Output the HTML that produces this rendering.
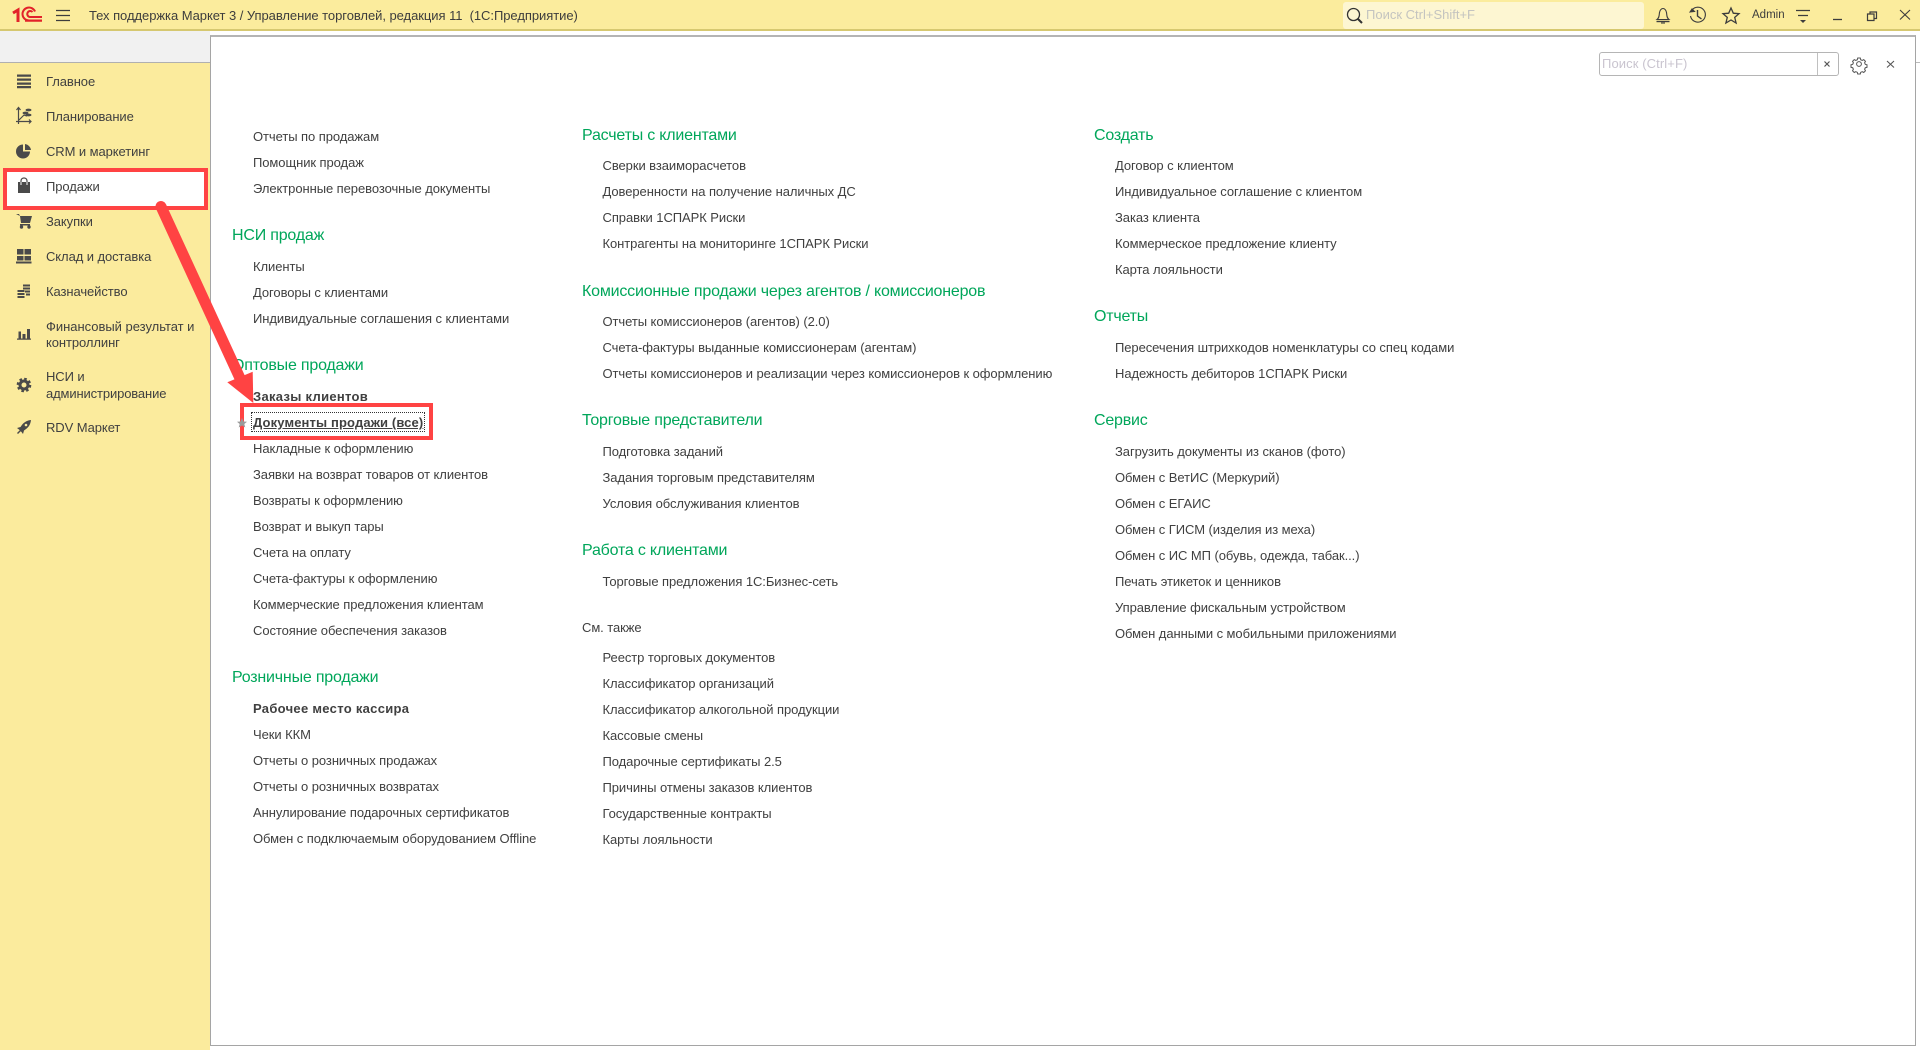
<!DOCTYPE html>
<html lang="ru"><head><meta charset="utf-8"><title>Тех поддержка Маркет 3</title>
<style>
html,body{margin:0;padding:0;width:1920px;height:1050px;overflow:hidden;background:#fff}
body{position:relative;font-family:"Liberation Sans",Arial,sans-serif;color:#3f3f3f;font-size:13px}
.a,.h,.n,.b{position:absolute;white-space:nowrap;line-height:16px}
.a{font-size:13px;color:#404040;letter-spacing:-.07px}
.b{font-size:13px;color:#404040;font-weight:bold;letter-spacing:.3px}
.h{font-size:16px;color:#00a65a;line-height:20px;letter-spacing:-.2px}
.n{font-size:13px;color:#404040;left:46px;letter-spacing:-.08px}
.box{position:absolute;box-sizing:border-box}
svg{position:absolute;overflow:visible}
</style></head><body>
<div class="box" style="left:0;top:0;width:1920px;height:31px;background:#fbec9d;border-bottom:2px solid #d6c870"></div>
<div class="box" style="left:0;top:31px;width:210px;height:32px;background:#f1f1f1;border-bottom:1px solid #b0b0b0"></div>
<div class="box" style="left:0;top:63px;width:210px;height:987px;background:#fbeb9d"></div>
<div class="box" style="left:210px;top:35px;width:1706px;height:1011px;border:1px solid #a5a5a5;border-top:2px solid #b4b4b4;background:#fff"></div>
<div class="box" style="left:1916px;top:62px;width:4px;height:1px;background:#bbb"></div>

<!-- logo -->
<svg style="left:0;top:0" width="130" height="31" viewBox="0 0 130 31" fill="none" stroke="#e2232a">
<path d="M13 13l5-3v12" stroke-width="3"/>
<path d="M42 20.500H29a6.500 6.500 0 1 1 6-9" stroke-width="2"/>
<path d="M42 17H30a3 3 0 1 1 2.500-5" stroke-width="2"/>
<path d="M25 21h17" stroke-width="1.500"/>
<g stroke="#3d3d3d" stroke-width="1.200"><path d="M56 10.500h14M56 15.500h14M56 20.500h14"/></g>
</svg>
<div class="a" style="left:89px;top:8px;font-size:13px;color:#3d3d3d;letter-spacing:-.05px;white-space:pre">Тех поддержка Маркет 3 / Управление торговлей, редакция 11  (1С:Предприятие)</div>

<!-- top search -->
<div class="box" style="left:1343px;top:2px;width:301px;height:27px;background:#fdf6d2;border-radius:3px"></div>
<svg style="left:1345px;top:6px" width="20" height="20" fill="none" stroke="#333" stroke-width="1.300"><circle cx="8.500" cy="8.500" r="6"/><path d="M13 13l4 4" stroke-width="2"/></svg>
<div class="a" style="left:1366px;top:7px;color:#c4c4c0;letter-spacing:0">Поиск Ctrl+Shift+F</div>

<!-- top right icons -->
<svg style="left:1640px;top:0" width="280" height="31" viewBox="0 0 280 31" fill="none" stroke="#3d3d3d" stroke-width="1.100">
<path d="M17 19.500c2.500-2 2-4 2.500-7 .4-2.500 2-4 3.500-4s3.100 1.500 3.500 4c.5 3 0 5 2.500 7z"/><path d="M16.500 21.500h13" stroke-width="1.400"/><path d="M21 23h4"/>
<path d="M52 10a7.500 7.500 0 1 1-1.500 6"/><path d="M50 12l2-3 2.500 2.500z" fill="#3d3d3d"/><path d="M57.500 10v6l4 3" stroke-width="1.400"/>
<path d="M91 8l2.300 5.200 5.700.5-4.300 3.700 1.400 5.600L91 20l-5.100 3 1.400-5.600-4.300-3.700 5.700-.5z" stroke-width="1.300"/>
<path d="M156 10.500h14M158 15.500h10" stroke-width="1.200"/><path d="M160 20h6l-3 3z" fill="#3d3d3d" stroke="none"/>
<path d="M193 19.500h9" stroke-width="1.300"/>
<path d="M227.500 14h6.500v6.500h-6.500zM230 14v-2h6.500v6.500H234" stroke-width="1.200"/>
<path d="M260 10l10 9.500M270 10l-10 9.500" stroke-width="1.100"/>
</svg>
<div class="a" style="left:1752px;top:7px;font-size:11.500px;color:#3d3d3d;letter-spacing:0">Admin</div>

<!-- form search -->
<div class="box" style="left:1599px;top:52px;width:240px;height:24px;border:1px solid #b5b5b5;border-radius:3px;background:#fff"></div>
<div class="box" style="left:1817px;top:53px;width:1px;height:22px;background:#c0c0c0"></div>
<div class="a" style="left:1602px;top:56px;color:#c9c4cf;letter-spacing:.1px">Поиск (Ctrl+F)</div>
<svg style="left:1820px;top:54px" width="90" height="22" fill="none" stroke="#555">
<path d="M4.500 7.500l5 5M9.500 7.500l-5 5" stroke-width="1.200"/>
<g transform="translate(39 10) scale(.85)"><circle r="2.800" stroke-width="1.200"/><path d="M-1.500-7h3l.5 2 1.800.8 1.800-1 2 2-1 1.800.8 1.800 2 .5v3l-2 .5-.8 1.800 1 1.800-2 2-1.800-1-1.800.8-.5 2h-3l-.5-2-1.800-.8-1.800 1-2-2 1-1.800-.8-1.800-2-.5v-3l2-.5.8-1.800-1-1.800 2-2 1.800 1 1.800-.8z" stroke-width="1.200"/></g>
<path d="M67 7l7 6.500M74 7l-7 6.500" stroke-width="1.100"/>
</svg>

<!-- sidebar -->
<div class="box" style="left:3px;top:170px;width:205px;height:40px;background:#fff"></div>
<div class="n" style="top:74px">Главное</div>
<div class="n" style="top:109px">Планирование</div>
<div class="n" style="top:144px">CRM и маркетинг</div>
<div class="n" style="top:179px">Продажи</div>
<div class="n" style="top:214px">Закупки</div>
<div class="n" style="top:249px">Склад и доставка</div>
<div class="n" style="top:284px">Казначейство</div>
<div class="n" style="top:319px;letter-spacing:-.02px">Финансовый результат и</div>
<div class="n" style="top:335px">контроллинг</div>
<div class="n" style="top:369px">НСИ и</div>
<div class="n" style="top:386px;letter-spacing:-.13px">администрирование</div>
<div class="n" style="top:420px">RDV Маркет</div>
<svg style="left:0;top:0" width="50" height="450" viewBox="0 0 50 450" fill="#4a4a4a" stroke="none">
<path d="M17 74.500h14v2.200H17zM17 78.500h14v2.200H17zM17 82.500h14v2.200H17zM17 86h14v2.200H17z"/>
<g fill="none" stroke="#4a4a4a" stroke-width="1.200"><path d="M18.500 108v16M16 121.500h15M16.500 110l2-2.500 2 2.500M29 119.500l2 2-2 2M19 120l5-5 3 1"/></g>
<ellipse cx="28.500" cy="110" rx="3" ry="1.400"/><ellipse cx="25.500" cy="113" rx="3" ry="1.400"/><ellipse cx="28.500" cy="115" rx="3" ry="1.400"/>
<path d="M23 144.500a7 7 0 1 0 7 7h-7z"/><path d="M25 144a7 7 0 0 1 6 6h-6z"/>
<path d="M18 182h12v11H18z"/><path d="M21 182v-1c0-4 6-4 6 0v1" fill="none" stroke="#4a4a4a" stroke-width="1.200"/><path d="M21 182v3M27 182v3" stroke="#fff" stroke-width="1"/>
<path d="M16 214h3l1 2h12l-2 7H21l-1-7" /><path d="M20 224h10v1.500H20z"/><circle cx="21.500" cy="227" r="1.700"/><circle cx="29" cy="227" r="1.700"/>
<path d="M17 249h6.500v5.500H17zM24.500 249H31v5.500h-6.500zM17 256h6.500v4.500H17zM24.500 256H31v4.500h-6.500zM16 261.500h15.500v2H16z"/>
<path d="M23 284.500h7v2h-7zM23 287.500h7v2h-7zM25 290.500h5v2h-5zM26 293.500h4v2h-4zM17.500 290h7v2h-7zM17.500 293h7v2h-7zM17.500 296h7v2h-7z"/>
<path d="M18.500 331.500H21v7h-2.500zM22.500 334h3v4.500h-3zM27 329h3v9.500h-3zM17 338.500h14v1.300H17z"/>
<circle cx="24" cy="385" r="4" fill="none" stroke="#4a4a4a" stroke-width="3"/><circle cx="24" cy="385" r="6.200" fill="none" stroke="#4a4a4a" stroke-width="2.200" stroke-dasharray="2.600 2.270"/>
<path d="M31 420c-5 .5-8 3-10.500 7l-3.500 1 2 1.500 2.500 2.500 1.500 2 1-3.500c4-2.500 6.500-5.500 7-10.500z"/><path d="M17 433l3-3 1 1-3 3z"/><circle cx="26" cy="425" r="1.300" fill="#fbeb9d"/>
</svg>

<!-- col 1 -->
<div class="a" style="left:253px;top:129px">Отчеты по продажам</div>
<div class="a" style="left:253px;top:155px">Помощник продаж</div>
<div class="a" style="left:253px;top:181px">Электронные перевозочные документы</div>
<div class="h" style="left:232px;top:226px">НСИ продаж</div>
<div class="a" style="left:253px;top:259px">Клиенты</div>
<div class="a" style="left:253px;top:285px">Договоры с клиентами</div>
<div class="a" style="left:253px;top:311px">Индивидуальные соглашения с клиентами</div>
<div class="h" style="left:232px;top:356px">Оптовые продажи</div>
<div class="b" style="left:253px;top:389px">Заказы клиентов</div>
<div class="b" style="left:253px;top:415px;text-decoration:underline;letter-spacing:.13px">Документы продажи (все)</div>
<div class="a" style="left:253px;top:441px">Накладные к оформлению</div>
<div class="a" style="left:253px;top:467px">Заявки на возврат товаров от клиентов</div>
<div class="a" style="left:253px;top:493px">Возвраты к оформлению</div>
<div class="a" style="left:253px;top:519px">Возврат и выкуп тары</div>
<div class="a" style="left:253px;top:545px">Счета на оплату</div>
<div class="a" style="left:253px;top:571px">Счета-фактуры к оформлению</div>
<div class="a" style="left:253px;top:597px">Коммерческие предложения клиентам</div>
<div class="a" style="left:253px;top:623px">Состояние обеспечения заказов</div>
<div class="h" style="left:232px;top:668px">Розничные продажи</div>
<div class="b" style="left:253px;top:701px">Рабочее место кассира</div>
<div class="a" style="left:253px;top:727px">Чеки ККМ</div>
<div class="a" style="left:253px;top:753px">Отчеты о розничных продажах</div>
<div class="a" style="left:253px;top:779px">Отчеты о розничных возвратах</div>
<div class="a" style="left:253px;top:805px">Аннулирование подарочных сертификатов</div>
<div class="a" style="left:253px;top:831px">Обмен с подключаемым оборудованием Offline</div>

<!-- col 2 -->
<div class="h" style="left:582px;top:126px">Расчеты с клиентами</div>
<div class="a" style="left:602.500px;top:158px">Сверки взаиморасчетов</div>
<div class="a" style="left:602.500px;top:184px">Доверенности на получение наличных ДС</div>
<div class="a" style="left:602.500px;top:210px">Справки 1СПАРК Риски</div>
<div class="a" style="left:602.500px;top:236px">Контрагенты на мониторинге 1СПАРК Риски</div>
<div class="h" style="left:582px;top:282px">Комиссионные продажи через агентов / комиссионеров</div>
<div class="a" style="left:602.500px;top:314px">Отчеты комиссионеров (агентов) (2.0)</div>
<div class="a" style="left:602.500px;top:340px">Счета-фактуры выданные комиссионерам (агентам)</div>
<div class="a" style="left:602.500px;top:366px">Отчеты комиссионеров и реализации через комиссионеров к оформлению</div>
<div class="h" style="left:582px;top:411px">Торговые представители</div>
<div class="a" style="left:602.500px;top:444px">Подготовка заданий</div>
<div class="a" style="left:602.500px;top:470px">Задания торговым представителям</div>
<div class="a" style="left:602.500px;top:496px">Условия обслуживания клиентов</div>
<div class="h" style="left:582px;top:541px">Работа с клиентами</div>
<div class="a" style="left:602.500px;top:574px">Торговые предложения 1С:Бизнес-сеть</div>
<div class="a" style="left:582px;top:620px">См. также</div>
<div class="a" style="left:602.500px;top:650px">Реестр торговых документов</div>
<div class="a" style="left:602.500px;top:676px">Классификатор организаций</div>
<div class="a" style="left:602.500px;top:702px">Классификатор алкогольной продукции</div>
<div class="a" style="left:602.500px;top:728px">Кассовые смены</div>
<div class="a" style="left:602.500px;top:754px">Подарочные сертификаты 2.5</div>
<div class="a" style="left:602.500px;top:780px">Причины отмены заказов клиентов</div>
<div class="a" style="left:602.500px;top:806px">Государственные контракты</div>
<div class="a" style="left:602.500px;top:832px">Карты лояльности</div>

<!-- col 3 -->
<div class="h" style="left:1094px;top:126px">Создать</div>
<div class="a" style="left:1115px;top:158px">Договор с клиентом</div>
<div class="a" style="left:1115px;top:184px">Индивидуальное соглашение с клиентом</div>
<div class="a" style="left:1115px;top:210px">Заказ клиента</div>
<div class="a" style="left:1115px;top:236px">Коммерческое предложение клиенту</div>
<div class="a" style="left:1115px;top:262px">Карта лояльности</div>
<div class="h" style="left:1094px;top:307px">Отчеты</div>
<div class="a" style="left:1115px;top:340px">Пересечения штрихкодов номенклатуры со спец кодами</div>
<div class="a" style="left:1115px;top:366px">Надежность дебиторов 1СПАРК Риски</div>
<div class="h" style="left:1094px;top:411px">Сервис</div>
<div class="a" style="left:1115px;top:444px">Загрузить документы из сканов (фото)</div>
<div class="a" style="left:1115px;top:470px">Обмен с ВетИС (Меркурий)</div>
<div class="a" style="left:1115px;top:496px">Обмен с ЕГАИС</div>
<div class="a" style="left:1115px;top:522px">Обмен с ГИСМ (изделия из меха)</div>
<div class="a" style="left:1115px;top:548px">Обмен с ИС МП (обувь, одежда, табак...)</div>
<div class="a" style="left:1115px;top:574px">Печать этикеток и ценников</div>
<div class="a" style="left:1115px;top:600px">Управление фискальным устройством</div>
<div class="a" style="left:1115px;top:626px">Обмен данными с мобильными приложениями</div>

<!-- focus + annotations -->
<div class="box" style="left:251px;top:412px;width:174px;height:20px;border:1px dotted #333"></div>
<div class="box" style="left:3px;top:168px;width:205px;height:42px;border:4px solid #ff4343"></div>
<div class="box" style="left:240px;top:403px;width:193px;height:37px;border:4px solid #ff4343"></div>
<svg style="left:0;top:0" width="500" height="500">
<path d="M242 418l1.500 3.500 3.500.3-2.700 2.200 1 3.500-3.300-2-3.300 2 1-3.500-2.700-2.200 3.500-.3z" fill="#9a9a9a"/>
<path d="M161 206.500L241.500 381.500" stroke="#ff4343" stroke-width="11" stroke-linecap="round" fill="none"/>
<path d="M227.300 382.300L252.700 371.700L253.300 403z" fill="#ff4343"/>
</svg>
</body></html>
